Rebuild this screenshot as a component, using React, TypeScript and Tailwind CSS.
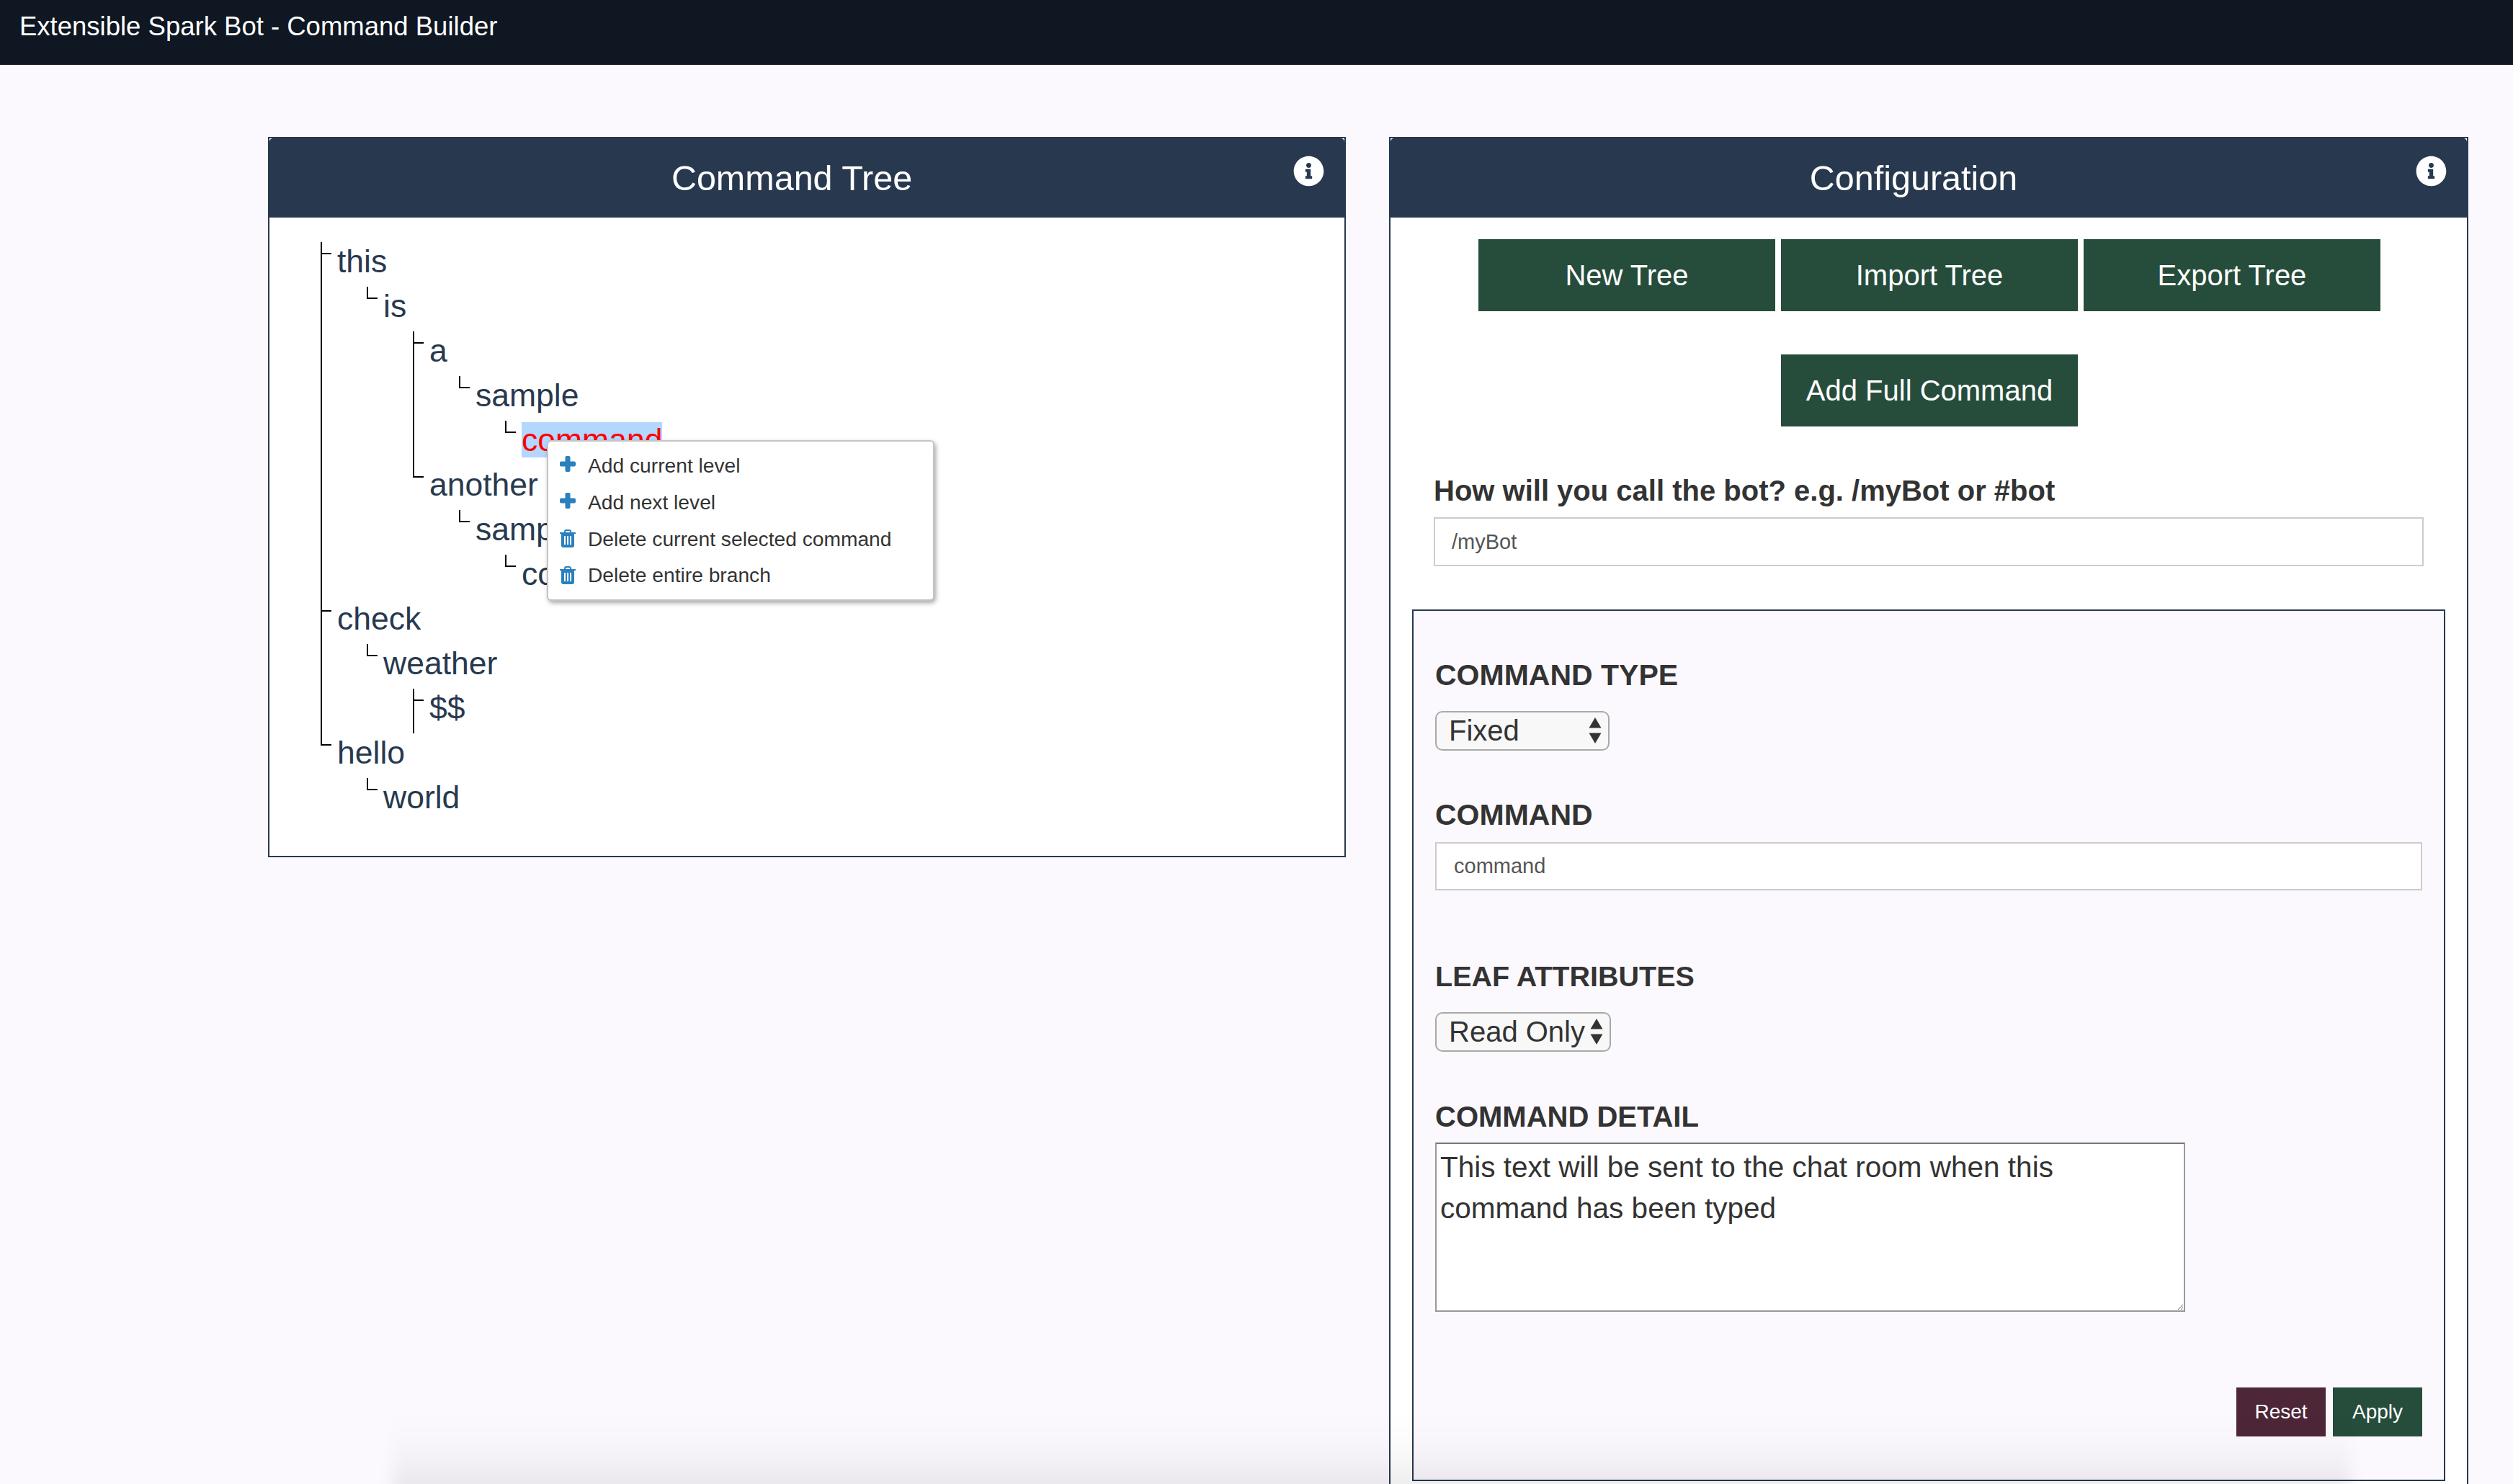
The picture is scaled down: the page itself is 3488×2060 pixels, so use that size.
import React from "react"
import { FaInfoCircle } from "react-icons/fa"

type TreeNode = {
    label: string
    selected?: boolean
    tall?: boolean
    children?: TreeNode[]
}

const tree: TreeNode[] = [
    {
        label: "this",
        children: [
            {
                label: "is",
                children: [
                    { label: "a", children: [{ label: "sample", children: [{ label: "command", selected: true }] }] },
                    { label: "another", children: [{ label: "sample", children: [{ label: "command" }] }] },
                ],
            },
        ],
    },
    {
        label: "check",
        children: [{ label: "weather", children: [{ label: "$$", tall: true }] }],
    },
    {
        label: "hello",
        children: [{ label: "world" }],
    },
]

function TreeList({ nodes, nested }: { nodes: TreeNode[]; nested?: boolean }) {
    return (
        <ul className={nested ? "ml-[64px]" : ""}>
            {nodes.map((node, i) => {
                const last = i === nodes.length - 1
                return (
                    <li key={node.label + i} className="relative">
                        {/* Connector lines */}
                        {node.tall ? (
                            <span className="absolute left-[-23px] top-[5px] h-[62px] w-[2px] bg-black" />
                        ) : last ? (
                            <span className="absolute left-[-23px] top-[5px] h-[17px] w-[2px] bg-black" />
                        ) : (
                            <span className="absolute left-[-23px] top-[5px] bottom-[-5px] w-[2px] bg-black" />
                        )}
                        <span className="absolute left-[-23px] top-[20px] h-[2px] w-[15px] bg-black" />
                        <div className="h-[62px] pt-[1px] text-[44.5px] leading-[62px]">
                            <span className={node.selected ? "bg-[#b3d7ff] text-[#ff0000]" : ""}>{node.label}</span>
                        </div>
                        {node.children && <TreeList nodes={node.children} nested />}
                    </li>
                )
            })}
        </ul>
    )
}

function PlusIcon() {
    return (
        <svg viewBox="0 0 22 22" className="h-[22px] w-[22px] -translate-y-[2px]" fill="#2a80bd">
            <rect x="7.500" y="0" width="7" height="22" rx="2" />
            <rect x="0" y="7.500" width="22" height="7" rx="2" />
        </svg>
    )
}

function TrashIcon() {
    return (
        <svg viewBox="0 0 22 25" className="h-[25px] w-[22px]" fill="#2a80bd">
            <path d="M7 5V3a2 2 0 0 1 2-2h4a2 2 0 0 1 2 2v2" fill="none" stroke="#2a80bd" strokeWidth="2" />
            <rect x="0" y="4" width="22" height="2" />
            <path d="M2 6h18v16a3 3 0 0 1-3 3H5a3 3 0 0 1-3-3z" />
            <rect x="6" y="9" width="2" height="12" fill="#fff" />
            <rect x="10" y="9" width="2" height="12" fill="#fff" />
            <rect x="14" y="9" width="2" height="12" fill="#fff" />
        </svg>
    )
}

function ContextMenu() {
    const items = [
        { label: "Add current level", icon: <PlusIcon /> },
        { label: "Add next level", icon: <PlusIcon /> },
        { label: "Delete current selected command", icon: <TrashIcon /> },
        { label: "Delete entire branch", icon: <TrashIcon /> },
    ]
    return (
        <div className="absolute left-[385px] top-[419px] z-10 w-[538px] rounded-[6px] border-2 border-[#c4c4c4] bg-white pt-[8px] pb-[8px] shadow-[2px_3px_6px_rgba(0,0,0,0.35)]">
            {items.map((item) => (
                <div key={item.label} className="flex h-[50.7px] items-center gap-[17px] pl-[16px] text-[28.2px] text-[#333333]">
                    {item.icon}
                    <span>{item.label}</span>
                </div>
            ))}
        </div>
    )
}

function PanelHeader({ title }: { title: string }) {
    return (
        <div className="relative flex h-[110px] items-center justify-center rounded-t-[5px] bg-[#28394f] pr-[42px] text-[48.5px] text-white">
            <span>{title}</span>
            <FaInfoCircle className="absolute right-[28px] top-[24px] h-[43px] w-[43px] text-white" />
        </div>
    )
}

function GreenButton({ children }: { children: React.ReactNode }) {
    return (
        <button type="button" className="h-[100px] w-[412px] bg-[#264d3b] text-[40px] text-white">
            {children}
        </button>
    )
}

function SectionLabel({ children, className }: { children: React.ReactNode; className: string }) {
    return <div className={`font-bold leading-[44px] text-[#333333] ${className}`}>{children}</div>
}

function SelectBox({ value, width }: { value: string; width: string }) {
    return (
        <button
            type="button"
            className={`relative mt-[28px] flex h-[55px] items-center rounded-[10px] border-2 border-[#a9a9a9] bg-[#f8f8f8] pb-[2px] pl-[17px] text-[40px] leading-[46px] text-[#333333] ${width}`}
        >
            <span>{value}</span>
            <svg viewBox="0 0 18 36" className="pointer-events-none absolute right-[9px] top-[7px] h-[36px] w-[18px]" fill="#333333">
                <path d="M9 0l8.500 14.500H.5z" />
                <path d="M.5 21.500h17L9 36z" />
            </svg>
        </button>
    )
}

export default function App() {
    return (
        <div className="relative h-[2060px] overflow-hidden bg-[#fbf9fd] font-['Liberation_Sans',Arial,sans-serif]">
            <div className="h-[90px] bg-[#0f1722] pl-[27px] pt-[16px] text-[36.500px] leading-[42px] text-white">
                Extensible Spark Bot - Command Builder
            </div>

            <div className="flex items-start gap-[60px] pl-[372px] pt-[100px]">
                {/* Command tree */}
                <div className="relative w-[1496px] border-2 border-[#28394f] bg-white">
                    <PanelHeader title="Command Tree" />
                    <div className="pb-[51px] pl-[94px] pt-[29px] text-[#28394f]">
                        <TreeList nodes={tree} />
                    </div>
                    <ContextMenu />
                </div>

                {/* Configuration */}
                <div className="w-[1498px] border-2 border-[#28394f] bg-white pb-[30px]">
                    <PanelHeader title="Configuration" />
                    <div className="flex justify-center gap-[8px] pl-[2px] pt-[30px]">
                        <GreenButton>New Tree</GreenButton>
                        <GreenButton>Import Tree</GreenButton>
                        <GreenButton>Export Tree</GreenButton>
                    </div>
                    <div className="mt-[60px] flex justify-center pl-[2px]">
                        <GreenButton>Add Full Command</GreenButton>
                    </div>
                    <div className="px-[60px]">
                        <SectionLabel className="mt-[67px] text-[40px]">How will you call the bot? e.g. /myBot or #bot</SectionLabel>
                        <input
                            defaultValue="/myBot"
                            className="mt-[15px] h-[68px] w-full border-2 border-[#cccccc] bg-white pl-[23px] text-[29px] text-[#555555]"
                        />
                    </div>

                    <div className="mx-[30px] mt-[60px] border-2 border-[#28394f] bg-[#fbf9fd] px-[30px] pb-[60px] pt-[67px]">
                        <SectionLabel className="text-[41px]">COMMAND TYPE</SectionLabel>
                        <SelectBox value="Fixed" width="w-[242px]" />

                        <SectionLabel className="mt-[67px] text-[41px]">COMMAND</SectionLabel>
                        <input
                            defaultValue="command"
                            className="mt-[16px] h-[67px] w-full border-2 border-[#cccccc] bg-white pl-[24px] text-[29px] text-[#555555]"
                        />

                        <SectionLabel className="mt-[97px] text-[39.500px]">LEAF ATTRIBUTES</SectionLabel>
                        <SelectBox value="Read Only" width="w-[244px]" />

                        <SectionLabel className="mt-[68px] text-[40px]">COMMAND DETAIL</SectionLabel>
                        <textarea
                            defaultValue="This text will be sent to the chat room when this command has been typed"
                            className="mt-[14px] block h-[235px] w-[1041px] resize border-2 border-[#999999] border-t-[#767676] bg-white pl-[5px] pr-[60px] pt-[4px] text-[40.500px] leading-[56.5px] text-[#333333]"
                        />

                        <div className="mt-[105px] flex justify-end gap-[10px]">
                            <button type="button" className="h-[68px] w-[124px] bg-[#4d2637] text-[28px] text-white">
                                Reset
                            </button>
                            <button type="button" className="h-[68px] w-[124px] bg-[#264d3b] text-[28px] text-white">
                                Apply
                            </button>
                        </div>
                    </div>
                </div>
            </div>

            <div className="pointer-events-none absolute bottom-[-20px] left-[545px] right-[225px] h-[120px] bg-[linear-gradient(to_bottom,transparent_0%,rgba(0,0,0,0.012)_35%,rgba(0,0,0,0.035)_60%,rgba(0,0,0,0.07)_85%,rgba(0,0,0,0.08)_100%)] blur-[10px]" />
        </div>
    )
}
